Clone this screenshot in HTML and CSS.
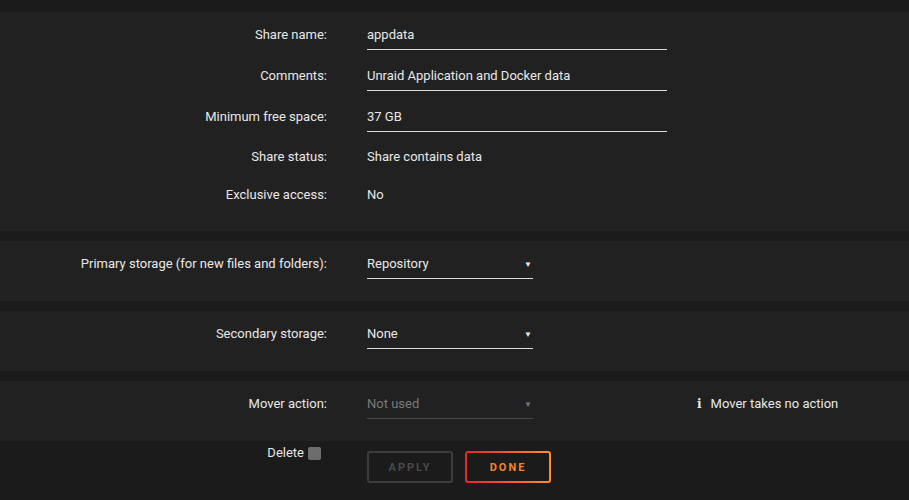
FILE: index.html
```html
<!DOCTYPE html>
<html lang="en">
<head>
  <meta charset="UTF-8" />
  <title>Share Settings</title>
  <link rel="stylesheet" href="styles.css">
</head>
<body>
  <div class="top-strip"></div>

  <!-- Share info -->
  <div class="section info">
    <div class="row">
      <label>Share name:</label>
      <div class="field"><span class="input">appdata</span></div>
    </div>
    <div class="row">
      <label>Comments:</label>
      <div class="field"><span class="input">Unraid Application and Docker data</span></div>
    </div>
    <div class="row short">
      <label>Minimum free space:</label>
      <div class="field"><span class="input">37 GB</span></div>
    </div>
    <div class="row plain">
      <label>Share status:</label>
      <div class="field">Share contains data</div>
    </div>
    <div class="row last">
      <label>Exclusive access:</label>
      <div class="field">No</div>
    </div>
  </div>

  <!-- Storage -->
  <div class="section single">
    <div class="row">
      <label>Primary storage (for new files and folders):</label>
      <div class="field"><span class="select">Repository<i class="caret">&#9660;</i></span></div>
    </div>
  </div>

  <div class="section single">
    <div class="row">
      <label>Secondary storage:</label>
      <div class="field"><span class="select">None<i class="caret">&#9660;</i></span></div>
    </div>
  </div>

  <div class="section single mover">
    <div class="row">
      <label>Mover action:</label>
      <div class="field"><span class="select disabled">Not used<i class="caret">&#9660;</i></span></div>
      <div class="hint"><span class="info-icon">i</span>Mover takes no action</div>
    </div>
  </div>

  <!-- Actions -->
  <div class="actions">
    <label class="delete">Delete <span class="checkbox"></span></label>
    <div class="buttons">
      <button class="btn apply">APPLY</button>
      <button class="btn done">DONE</button>
    </div>
  </div>
</body>
</html>
```

FILE: styles.css
```css
:root {
  --bg: #1c1b1c;
  --card: #212121;
  --text: #e8e8e8;
  --accent: #f2862a;
}

body {
  font-family: Roboto, sans-serif;
  font-size: 13px;
  line-height: 18px;
  background: var(--bg);
  color: var(--text);
  margin: 0;
}

.top-strip {
  height: 12px;
}

.section {
  background: var(--card);
  margin-bottom: 10px;
}

.section.mover {
  margin-bottom: 0;
}

.section.info {
  padding: 14px 0 27px;
}

.section.single {
  height: 60px;
  box-sizing: border-box;
  padding-top: 14px;
}

.row {
  display: flex;
  align-items: flex-start;
  height: 41px;
}

.row.short {
  height: 40px;
}

.row.plain {
  height: 38px;
}

.row.last {
  height: 18px;
}

.row label {
  width: 327px;
  text-align: right;
  padding-right: 40px;
  flex-shrink: 0;
}

.field {
  width: 300px;
}

.input {
  display: block;
  width: 300px;
  border-bottom: 1.5px solid #dcdcdc;
  padding-bottom: 5px;
}

.select {
  position: relative;
  display: block;
  width: 166px;
  border-bottom: 1.5px solid #dcdcdc;
  padding-bottom: 5px;
}

.select.disabled {
  color: #7a7a7a;
  border-bottom-color: #4a4a4a;
}

.caret {
  position: absolute;
  right: 1px;
  top: 1px;
  font-style: normal;
  font-size: 8px;
  color: #e8e8e8;
}

.select.disabled .caret {
  color: #7a7a7a;
}

.hint {
  margin-left: 30px;
  display: flex;
  align-items: center;
}

.info-icon {
  font-family: 'DejaVu Serif', serif;
  font-weight: bold;
  font-size: 12px;
  margin-right: 9px;
}

.actions {
  display: flex;
  align-items: flex-start;
  padding-top: 3px;
}

.delete {
  width: 321px;
  display: flex;
  justify-content: flex-end;
  align-items: center;
  margin-right: 46px;
}

.checkbox {
  display: inline-block;
  width: 13px;
  height: 13px;
  background: #6d6d6d;
  border-radius: 2px;
  margin-left: 4px;
}

.buttons {
  display: flex;
  gap: 12px;
  margin-top: 7px;
}

.btn {
  width: 86px;
  height: 32px;
  font-family: Roboto, sans-serif;
  font-size: 11px;
  font-weight: bold;
  letter-spacing: 2px;
  background: transparent;
  border-radius: 3px;
  cursor: pointer;
}

.btn.apply {
  border: 2px solid #3c3c3c;
  color: #4a4a4a;
}

.btn.done {
  border: 2px solid transparent;
  color: var(--accent);
  background: linear-gradient(var(--bg), var(--bg)) padding-box,
              linear-gradient(90deg, #e22828, #ff8c2f) border-box;
}
```
